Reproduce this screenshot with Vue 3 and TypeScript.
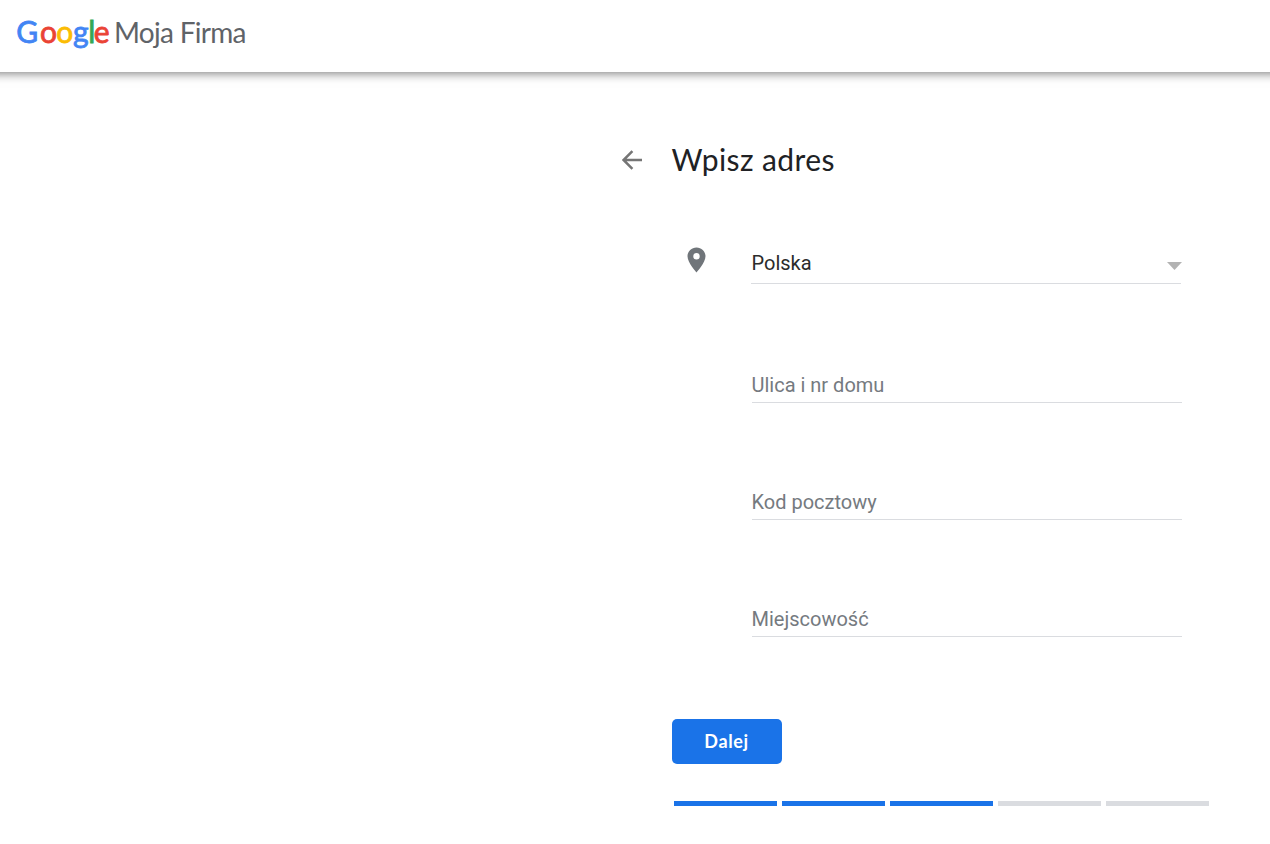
<script setup lang="ts">
import { ref } from 'vue'

interface Field {
  id: string
  label: string
}

interface LogoLetter {
  char: string
  x: number
  color: string
}

const fields: Field[] = [
  { id: 'street', label: 'Ulica i nr domu' },
  { id: 'postcode', label: 'Kod pocztowy' },
  { id: 'city', label: 'Miejscowość' },
]

const logo: LogoLetter[] = [
  { char: 'G', x: 16.2, color: '#4285f4' },
  { char: 'o', x: 39.9, color: '#ea4335' },
  { char: 'o', x: 56.3, color: '#fbbc04' },
  { char: 'g', x: 73, color: '#4285f4' },
  { char: 'l', x: 88.2, color: '#34a853' },
  { char: 'e', x: 93.7, color: '#ea4335' },
]

const values = ref<Record<string, string>>({ street: '', postcode: '', city: '' })
const steps = 5
const currentStep = 3
</script>

<template>
  <div class="page">
    <header class="bar">
      <svg class="logo" width="260" height="72" viewBox="0 0 260 72" role="img" aria-label="Google Moja Firma">
        <text class="brand" y="42.5">
          <tspan v-for="(l, i) in logo" :key="i" :x="l.x" :fill="l.color" :stroke="l.color">{{ l.char }}</tspan>
        </text>
        <text class="product" x="114" y="42.5" textLength="132.5">Moja Firma</text>
      </svg>
    </header>

    <main class="content">
      <div class="title-row">
        <button class="back" type="button" aria-label="Wstecz">
          <svg width="20" height="20" viewBox="0 0 20 20">
            <path d="M20 10H1.8M10.4 1.1L1.5 10l8.9 8.9" fill="none" stroke="#757575" stroke-width="2.5" />
          </svg>
        </button>
        <h1>Wpisz adres</h1>
      </div>

      <form class="form" @submit.prevent>
        <div class="country">
          <svg class="pin" width="19" height="26" viewBox="-0.5 -0.5 19 26">
            <path
              d="M9 0C4 0 0 3.9 0 8.8 0 15.4 9 25 9 25s9-9.6 9-16.2C18 3.9 14 0 9 0zm0 12a3.2 3.2 0 1 1 0-6.4A3.2 3.2 0 0 1 9 12z"
              fill="#70757a"
            />
          </svg>
          <div class="select">
            <span>Polska</span>
            <svg class="caret" width="15" height="8" viewBox="0 0 15 8">
              <path d="M0 0h15L7.5 8z" fill="#b3b3b3" />
            </svg>
          </div>
        </div>

        <input
          v-for="f in fields"
          :key="f.id"
          v-model="values[f.id]"
          class="field"
          type="text"
          :placeholder="f.label"
        />

        <button class="next" type="submit"><span>Dalej</span></button>
      </form>

      <div class="progress">
        <span v-for="n in steps" :key="n" class="step" :class="{ done: n <= currentStep }"></span>
      </div>
    </main>
  </div>
</template>

<style>
body {
  margin: 0;
  background: #fff;
}
</style>

<style scoped>
.page {
  height: 844px;
  overflow: hidden;
  background: #fff;
  font-family: Roboto, "Liberation Sans", sans-serif;
}

.bar {
  height: 72px;
  margin: 0 -20px;
  padding: 0 20px;
  background: #fff;
  box-shadow: 0 1px 10px rgba(0, 0, 0, 0.55);
}

.logo {
  display: block;
}

.brand {
  font: 400 30px Lato, sans-serif;
  stroke-width: 0.8px;
}

.product {
  font: 400 28px Lato, sans-serif;
  fill: #5f6368;
}

.content {
  margin-left: 622px;
  padding-top: 68px;
}

.title-row {
  display: flex;
  align-items: center;
  height: 40px;
}

.back {
  width: 20px;
  height: 20px;
  margin: 0 30px 0 0;
  padding: 0;
  border: 0;
  background: none;
}

.back svg {
  display: block;
}

h1 {
  margin: 0 0 2px -0.5px;
  font: 400 30px/38px Lato, sans-serif;
  letter-spacing: 0.4px;
  color: #202124;
}

.form {
  display: flex;
  flex-direction: column;
  align-items: flex-start;
  margin-left: 50px;
  padding-top: 63px;
}

.country {
  display: flex;
  align-items: flex-start;
  height: 41px;
  margin-left: 15px;
}

.pin {
  margin-top: 4px;
}

.select {
  display: flex;
  justify-content: space-between;
  box-sizing: border-box;
  width: 430px;
  height: 41px;
  margin-left: 45px;
  padding-left: 0.5px;
  border-bottom: 1px solid #dadce0;
  color: #2c2c2c;
  font-size: 20px;
  line-height: 40px;
}

.caret {
  margin: 19px -1px 0 0;
}

.field {
  box-sizing: border-box;
  width: 430px;
  height: 37px;
  margin: 82px 0 0 80px;
  padding: 2px 0 0;
  border: 0;
  border-bottom: 1px solid #dadce0;
  outline: 0;
  background: none;
  color: #212121;
  font: 400 20px/34px Roboto, sans-serif;
  text-indent: -0.5px;
}

.field + .field {
  margin-top: 80px;
}

.field::placeholder {
  color: #757a7f;
  opacity: 1;
}

.next {
  width: 110px;
  height: 45px;
  margin: 82px 0 0;
  padding: 0 1px 2px 0;
  border: 0;
  border-radius: 5px;
  background: #1a73e8;
  color: #fff;
  font: 700 18px/42px Lato, sans-serif;
  letter-spacing: 0.6px;
}

.progress {
  display: flex;
  gap: 5px;
  margin: 37px 0 0 52px;
}

.step {
  width: 103px;
  height: 5px;
  background: #dadce0;
}

.step.done {
  background: #1a73e8;
}
</style>
